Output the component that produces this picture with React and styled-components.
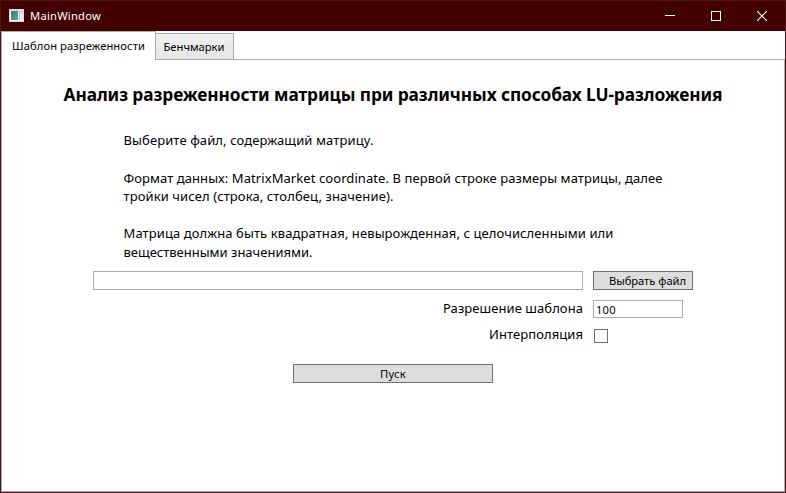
import React from 'react';
import styled, { createGlobalStyle } from 'styled-components';

const GlobalStyle = createGlobalStyle`
  * { box-sizing: border-box; }
  body { margin: 0; background: #fff; overflow: hidden; }
`;

const Window = styled.div`
  width: 786px;
  height: 493px;
  display: flex;
  flex-direction: column;
  border: 1px solid #4f1418;
  background: #fff;
  color: #000;
  font-family: "Noto Sans", "Open Sans", sans-serif;
  font-size: 11.2px;
`;

const TitleBar = styled.header`
  height: 30px;
  flex: none;
  display: flex;
  align-items: center;
  padding-left: 8px;
  background: #420000;
  color: #fff;
`;

const WindowTitle = styled.span`
  flex: 1;
  margin-left: 6px;
  line-height: 16px;
  letter-spacing: 0.235px;
`;

const Caption = styled.span`
  width: 46px;
  height: 30px;
  display: flex;
  align-items: center;
  justify-content: center;
`;

const TabStrip = styled.nav`
  height: 28px;
  flex: none;
  display: flex;
  align-items: flex-end;
`;

const Tab = styled.div`
  position: relative;
  width: ${(p) => p.$width}px;
  height: ${(p) => (p.$active ? 29 : 27)}px;
  margin-bottom: -1px;
  margin-left: ${(p) => (p.$active ? 0 : -1)}px;
  padding: ${(p) => (p.$active ? '6px 0 0 10px' : '5px 0 0 7.5px')};
  z-index: ${(p) => (p.$active ? 2 : 1)};
  border: 1px solid #acacac;
  ${(p) => p.$active && 'border-bottom: 0;'}
  background: ${(p) => (p.$active ? '#fff' : 'linear-gradient(#f0f0f0, #e5e5e5)')};
  line-height: 16px;
  letter-spacing: ${(p) => p.$track || 0}px;
  white-space: nowrap;
`;

const Pane = styled.main`
  flex: 1;
  display: flex;
  flex-direction: column;
  padding: 0 91px;
  border: 1px solid #acacac;
`;

const Heading = styled.h1`
  margin: 22px -30px 0;
  height: 26px;
  line-height: 26px;
  font-size: 17.3px;
  font-weight: 700;
  letter-spacing: -0.09px;
  white-space: nowrap;
  text-align: center;
`;

const Description = styled.div`
  margin: 23px 0 0 30.5px;
  height: 130px;
  padding-top: 0.35px;
  font-size: 13px;
  line-height: 18.62px;
`;

const Paragraph = styled.p`
  margin: 0 0 18.62px;
`;

const Line = styled.span`
  display: block;
  white-space: nowrap;
  letter-spacing: ${(p) => p.$track}px;
`;

const Row = styled.div`
  display: flex;
  align-items: flex-start;
  gap: 10px;
  height: ${(p) => p.$height}px;
  margin-top: ${(p) => p.$top}px;
`;

const TextBox = styled.input`
  width: ${(p) => p.$width}px;
  height: ${(p) => p.$height}px;
  margin: 0;
  padding: 0 2px;
  border: 1px solid #abadb3;
  border-radius: 0;
  outline: 0;
  background: #fff;
  color: #000;
  font: inherit;
  letter-spacing: 0.2px;
`;

const Button = styled.button`
  width: ${(p) => p.$width}px;
  height: 19px;
  margin: 0;
  padding: 0 0 0 ${(p) => p.$indent || 0}px;
  border: 1px solid #707070;
  border-radius: 0;
  background: #ddd;
  color: #000;
  font: inherit;
  line-height: 17px;
  letter-spacing: ${(p) => p.$track}px;
  white-space: nowrap;
`;

const Label = styled.label`
  width: 490px;
  margin-top: ${(p) => p.$shift || 0}px;
  text-align: right;
  font-size: 13px;
  line-height: 18px;
  letter-spacing: 0.07px;
`;

const CheckBox = styled.input.attrs({ type: 'checkbox' })`
  appearance: none;
  width: 14px;
  height: 14px;
  margin: 4px 0 0 1px;
  border: 1px solid #707070;
  background: #fff;
`;

const Actions = styled.div`
  display: flex;
  justify-content: center;
  margin-top: 20px;
`;

const IconSvg = styled.svg`
  margin-top: -2px;
`;

function AppIcon() {
  return (
    <IconSvg width="15" height="13" viewBox="0 0 15 13" shapeRendering="crispEdges">
      <defs>
        <linearGradient id="screen" x1="0" y1="0" x2="1" y2="1">
          <stop offset="0" stopColor="#3d6f9c" />
          <stop offset="1" stopColor="#5fae72" />
        </linearGradient>
      </defs>
      <rect width="15" height="13" fill="#d5d9dc" />
      <rect x="1" y="2" width="13" height="10" fill="#f4f6f7" />
      <rect x="2" y="2" width="7" height="9" fill="url(#screen)" />
      <rect x="10" y="2" width="1" height="9" fill="#b5c4ce" />
      <rect x="11" y="2" width="3" height="3" fill="#c9dce6" />
      <rect x="11" y="6" width="2" height="4" fill="#dfe7ea" />
    </IconSvg>
  );
}

export default function App() {
  return (
    <>
      <GlobalStyle />
      <Window>
        <TitleBar>
          <AppIcon />
          <WindowTitle>MainWindow</WindowTitle>
          <Caption>
            <svg width="10" height="10" viewBox="0 0 10 10">
              <path d="M0 4.5H10" stroke="#fff" />
            </svg>
          </Caption>
          <Caption>
            <svg width="10" height="10" viewBox="0 0 10 10">
              <rect x=".5" y=".5" width="9" height="9" fill="none" stroke="#fff" />
            </svg>
          </Caption>
          <Caption>
            <svg width="10" height="10" viewBox="0 0 10 10">
              <path d="M0 0L10 10M10 0L0 10" stroke="#fff" strokeWidth="1.1" />
            </svg>
          </Caption>
        </TitleBar>
        <TabStrip>
          <Tab $active $width={155} $track={0.091}>Шаблон разреженности</Tab>
          <Tab $width={79}>Бенчмарки</Tab>
        </TabStrip>
        <Pane>
          <Heading>Анализ разреженности матрицы при различных способах LU-разложения</Heading>
          <Description>
            <Paragraph>
              <Line $track={0.109}>Выберите файл, содержащий матрицу.</Line>
            </Paragraph>
            <Paragraph>
              <Line $track={0.074}>Формат данных: MatrixMarket coordinate. В первой строке размеры матрицы, далее</Line>
              <Line $track={0.106}>тройки чисел (строка, столбец, значение).</Line>
            </Paragraph>
            <Paragraph>
              <Line $track={0.096}>Матрица должна быть квадратная, невырожденная, с целочисленными или</Line>
              <Line $track={0}>вещественными значениями.</Line>
            </Paragraph>
          </Description>
          <Row $top={10} $height={19}>
            <TextBox $width={490} $height={19} />
            <Button $width={100} $indent={9} $track={-0.045}>Выбрать файл</Button>
          </Row>
          <Row $top={10} $height={18}>
            <Label $shift={-1}>Разрешение шаблона</Label>
            <TextBox $width={90} $height={18} defaultValue="100" />
          </Row>
          <Row $top={7} $height={19}>
            <Label>Интерполяция</Label>
            <CheckBox />
          </Row>
          <Actions>
            <Button $width={200} $track={0.24}>Пуск</Button>
          </Actions>
        </Pane>
      </Window>
    </>
  );
}
